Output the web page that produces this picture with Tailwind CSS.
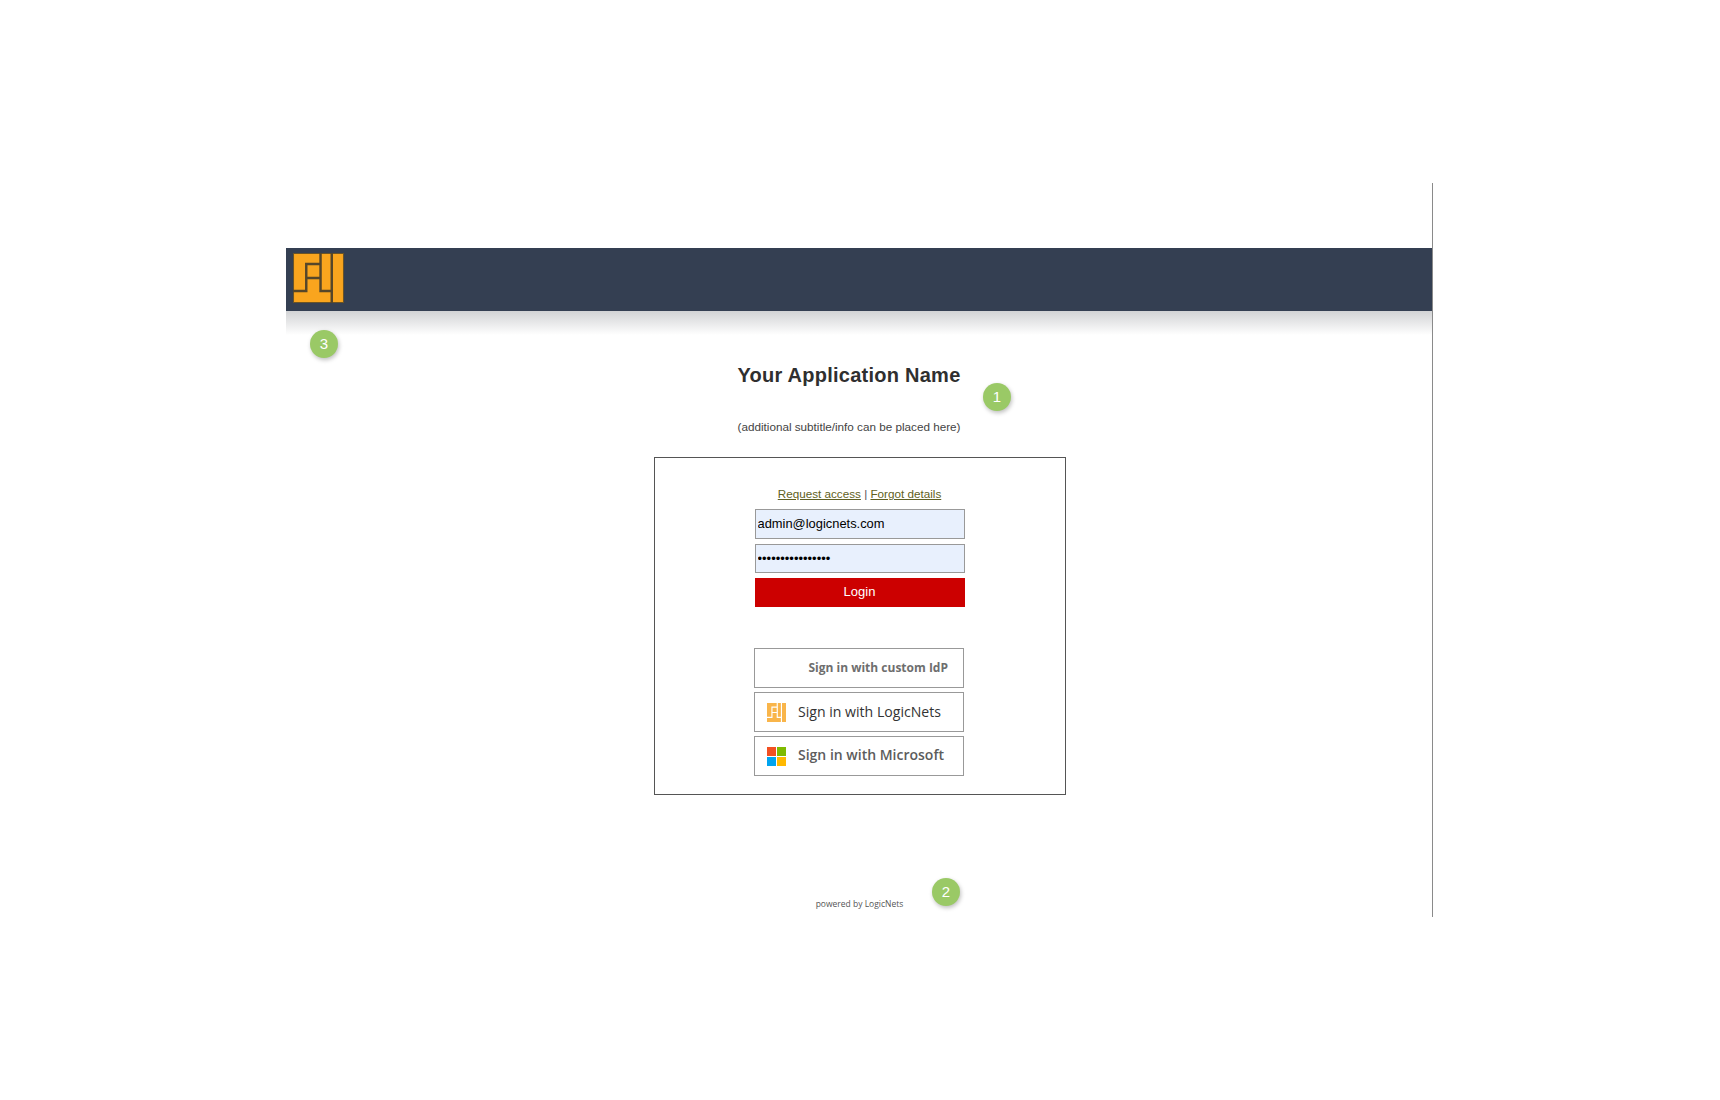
<!DOCTYPE html>
<html lang="en">
<head>
<meta charset="utf-8">
<title>Login</title>
<script src="https://cdn.jsdelivr.net/npm/@tailwindcss/browser@4"></script>
</head>
<body class="bg-white font-['Liberation_Sans',Arial,sans-serif]">
<div class="relative w-[1720px] h-[1100px] overflow-hidden pt-[183px] pl-[286px]">
  <div class="relative w-[1147px] h-[734px] border-r border-[#8a8a8a] pt-[65px] flex flex-col">
    <header class="h-[63px] w-full bg-[#343f52] flex items-start pl-[7px] pt-[5px] shrink-0">
      <svg width="51" height="50" viewBox="0 0 50 50" preserveAspectRatio="none" class="block">
        <rect x="0.5" y="0.5" width="49" height="49" fill="#f9a51e" stroke="#6b5426"/>
        <path d="M27 0V11H13V38H0M13 25H27M27 11V38H38M38 0V50" fill="none" stroke="#55462a" stroke-width="2.4"/>
      </svg>
    </header>
    <div class="h-6 w-full bg-linear-to-b from-[#d2d3d5] to-white shrink-0"></div>

    <div class="pr-[20px] text-center text-[#2f2f2f]">
      <h1 class="mt-[27px] text-[20px] leading-[26px] font-bold tracking-[0.25px]">Your Application Name</h1>
      <p class="mt-[31px] text-[11.7px] leading-[16px] text-[#444]">(additional subtitle/info can be placed here)</p>
    </div>

    <main class="mt-[22px] ml-[368px] w-[412px] h-[338px] border border-[#555] flex flex-col items-center pt-[29px] pr-[1px] shrink-0">
      <p class="text-[11.7px] leading-[14px] text-[#555]"><a href="#" class="underline text-[#5f5f22]">Request access</a> | <a href="#" class="underline text-[#5f5f22]">Forgot details</a></p>
      <form class="mt-[8px] w-[210px] flex flex-col gap-[5px]">
        <input type="text" value="admin@logicnets.com" class="h-[30px] w-full border border-[#999] bg-[#e8f0fd] px-[2px] pb-[2px] text-[12.9px] text-black outline-none">
        <input type="password" value="passwordpassword" class="h-[29px] w-full border border-[#999] bg-[#e8f0fd] px-[2px] text-[13px] text-black outline-none">
        <button type="button" class="h-[29px] w-full bg-[#cc0000] pb-[2px] text-[13px] text-white">Login</button>
      </form>
      <div class="mt-[41px] w-[210px] mr-[1px] flex flex-col gap-[4px] font-['Open_Sans',sans-serif]">
        <a href="#" class="h-[40px] border border-[#999] flex items-center justify-end pr-[15px] text-[12px] font-bold text-[#6e6e6e]">Sign in with custom IdP</a>
        <a href="#" class="h-[40px] border border-[#999] flex items-center pl-[12px] gap-[12px] text-[14.1px] font-medium text-[#333]">
          <svg width="19" height="19" viewBox="0 0 50 50" class="block shrink-0">
            <rect width="50" height="50" fill="#f9b54a"/>
            <path d="M27 0V11H13V38H0M13 25H27M27 11V38H38M38 0V50" fill="none" stroke="#fff" stroke-width="3"/>
          </svg>
          Sign in with LogicNets
        </a>
        <a href="#" class="h-[40px] border border-[#999] flex items-center pl-[12px] pb-[3px] gap-[12px] text-[14px] font-semibold text-[#5c5c5c]">
          <svg width="19" height="19" viewBox="0 0 19 19" class="block shrink-0 mt-[3px]">
            <rect width="9" height="9" fill="#f25022"/>
            <rect x="10" width="9" height="9" fill="#7fba00"/>
            <rect y="10" width="9" height="9" fill="#00a4ef"/>
            <rect x="10" y="10" width="9" height="9" fill="#ffb900"/>
          </svg>
          Sign in with Microsoft
        </a>
      </div>
    </main>

    <p class="mt-[102px] ml-[368px] w-[411px] text-center font-['Open_Sans',sans-serif] text-[8.5px] leading-[14px] text-[#555]">powered by LogicNets</p>

    <span class="absolute left-[24px] top-[147px] size-[28px] rounded-full bg-[#9ac966] shadow-[1px_2px_4px_rgba(0,0,0,0.25)] flex items-center justify-center text-white text-[15px]">3</span>
    <span class="absolute left-[697px] top-[200px] size-[28px] rounded-full bg-[#9ac966] shadow-[1px_2px_4px_rgba(0,0,0,0.25)] flex items-center justify-center text-white text-[15px]">1</span>
    <span class="absolute left-[646px] top-[695px] size-[28px] rounded-full bg-[#9ac966] shadow-[1px_2px_4px_rgba(0,0,0,0.25)] flex items-center justify-center text-white text-[15px]">2</span>
  </div>
</div>
</body>
</html>
